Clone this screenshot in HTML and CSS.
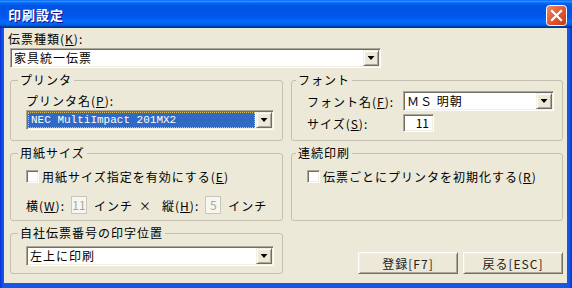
FILE: index.html
```html
<!DOCTYPE html>
<html lang="ja">
<head>
	<meta charset="utf-8">
	<title>印刷設定</title>
	<link rel="stylesheet" href="styles.css">
</head>
<body>
	<div class="window">
		<div class="title-bar">
			<span class="title">印刷設定</span>
			<span class="close-btn">
				<svg width="21" height="21" viewBox="0 0 21 21">
					<defs>
						<linearGradient id="closeFill" x1="0" y1="0" x2="1" y2="1">
							<stop offset="0" stop-color="#f08a6c"/>
							<stop offset="0.5" stop-color="#e05a35"/>
							<stop offset="1" stop-color="#c23a12"/>
						</linearGradient>
					</defs>
					<rect x="0.5" y="0.5" width="20" height="20" rx="3" fill="url(#closeFill)" stroke="#fff"/>
					<path d="M6 6 L15 15 M15 6 L6 15" stroke="#fff" stroke-width="2.2" stroke-linecap="square"/>
				</svg>
			</span>
		</div>

		<div class="client">
			<div class="slip-type">
				<div class="label">伝票種類(<u>K</u>):</div>
				<div class="combo slip-combo">
					<span class="value">家具統一伝票</span>
					<span class="drop"></span>
				</div>
			</div>

			<div class="groups">
				<fieldset class="group printer-group">
					<legend>プリンタ</legend>
					<div class="label">プリンタ名(<u>P</u>):</div>
					<div class="combo">
						<span class="value selected">NEC MultiImpact 201MX2</span>
						<span class="drop"></span>
					</div>
				</fieldset>

				<fieldset class="group font-group">
					<legend>フォント</legend>
					<div class="form-row">
						<span class="row-label">フォント名(<u>F</u>):</span>
						<div class="combo font-combo">
							<span class="value">ＭＳ 明朝</span>
							<span class="drop"></span>
						</div>
					</div>
					<div class="form-row size-row">
						<span class="row-label">サイズ(<u>S</u>):</span>
						<span class="textbox size-box">11</span>
					</div>
				</fieldset>

				<fieldset class="group paper-group">
					<legend>用紙サイズ</legend>
					<div class="check-row">
						<span class="checkbox"></span>
						<span>用紙サイズ指定を有効にする(<u>E</u>)</span>
					</div>
					<div class="paper-size">
						<span>横(<u>W</u>):</span>
						<span class="textbox disabled">11</span>
						<span class="unit">インチ</span>
						<span class="times">×</span>
						<span>縦(<u>H</u>):</span>
						<span class="textbox disabled">5</span>
						<span class="unit">インチ</span>
					</div>
				</fieldset>

				<fieldset class="group serial-group">
					<legend>連続印刷</legend>
					<div class="check-row">
						<span class="checkbox"></span>
						<span>伝票ごとにプリンタを初期化する(<u>R</u>)</span>
					</div>
				</fieldset>

				<fieldset class="group number-group">
					<legend>自社伝票番号の印字位置</legend>
					<div class="combo">
						<span class="value">左上に印刷</span>
						<span class="drop"></span>
					</div>
				</fieldset>

				<div class="button-container">
					<button id="save">登録[F7]</button>
					<button id="back">戻る[ESC]</button>
				</div>
			</div>
		</div>
	</div>
</body>
</html>
```

FILE: styles.css
```css
body {
	margin: 0;
	font-family: "Noto Sans CJK JP", sans-serif;
	font-size: 12px;
	color: #000;
	background: #fff;
}

u {
	text-decoration-thickness: 1px;
	text-underline-offset: 1px;
}

.window {
	width: 572px;
	height: 288px;
	box-sizing: border-box;
	display: flex;
	flex-direction: column;
	background: linear-gradient(to right, #0831d9, #1658e6 3px, #1658e6 calc(100% - 3px), #0831d9);
}

/* title bar */
.title-bar {
	height: 28px;
	box-sizing: border-box;
	display: flex;
	align-items: center;
	justify-content: space-between;
	padding: 0 5px 0 8px;
	background: linear-gradient(to bottom, #0058ee 0%, #3593ff 4%, #288eff 6%, #127dff 8%, #036ffc 10%, #0262ee 14%, #0057e5 20%, #0054e3 24%, #0055eb 56%, #005bf5 66%, #026afe 76%, #0062ef 86%, #0052d6 92%, #0040ab 94%, #003092 100%);
}

.title {
	color: #fff;
	font-weight: bold;
	font-size: 13px;
	letter-spacing: 1px;
	text-shadow: 1px 1px #0f1089;
}

.close-btn {
	display: flex;
	margin-top: 2px;
}

/* dialog body */
.client {
	flex: 1;
	margin: 0 5px 5px 4px;
	padding: 4px 4px 0 6px;
	background: #ece9d8;
	letter-spacing: 1px;
	display: flex;
	flex-direction: column;
}

.label {
	line-height: 14px;
	margin-bottom: 2px;
}

.slip-type .label {
	margin-left: -2px;
}

.slip-combo {
	width: 371px;
}

.groups {
	margin-top: 5px;
	display: grid;
	grid-template-columns: 273px 272px;
	grid-template-rows: 68px 75px 48px;
	column-gap: 8px;
	row-gap: 5px;
}

/* group boxes */
.group {
	margin: 0;
	padding: 0 8px 0 15px;
	min-width: 0;
	box-sizing: border-box;
	border: 1px solid #c3c0b0;
	border-radius: 3px;
}

.group legend {
	padding: 0 2px;
	margin-left: -8px;
	line-height: 14px;
}

.font-group legend, .serial-group legend {
	margin-left: -11px;
}

.printer-group {
	padding-top: 7px;
}

.font-group {
	padding-top: 4px;
}

.number-group {
	padding-top: 6px;
}

/* combo boxes */
.combo {
	display: flex;
	height: 20px;
	box-sizing: border-box;
	padding: 1px;
	background: #fff;
	border: 1px solid;
	border-color: #aca899 #fff #fff #aca899;
	box-shadow: inset 1px 1px #716f64, inset -1px -1px #f1efe2;
}

.combo .value {
	flex: 1;
	padding: 0 2px;
	line-height: 16px;
	white-space: nowrap;
	overflow: hidden;
}

.combo .value.selected {
	margin-right: 1px;
	padding-left: 3px;
	background: #316ac5;
	color: #fff;
	font-family: "Liberation Mono", monospace;
	font-size: 11px;
	letter-spacing: 0;
	outline: 1px dotted #d8c060;
	outline-offset: -1px;
}

.drop {
	width: 16px;
	box-sizing: border-box;
	display: flex;
	align-items: center;
	justify-content: center;
	background: #ece9d8;
	border: 1px solid;
	border-color: #f1efe2 #716f64 #716f64 #f1efe2;
	box-shadow: inset 1px 1px #fff, inset -1px -1px #aca899;
}

.drop::before {
	content: "";
	width: 7px;
	height: 4px;
	background: #000;
	clip-path: polygon(0 0, 100% 0, 50% 100%);
}

/* font group rows */
.form-row {
	display: flex;
	align-items: center;
}

.row-label {
	width: 96px;
}

.font-combo {
	width: 151px;
}

.size-row {
	margin-top: 3px;
}

.textbox {
	box-sizing: border-box;
	height: 18px;
	line-height: 14px;
	background: #fff;
	border: 1px solid;
	border-color: #aca899 #fff #fff #aca899;
	box-shadow: inset 1px 1px #716f64, inset -1px -1px #f1efe2;
}

.size-box {
	width: 31px;
	padding: 1px 4px 0 0;
	text-align: right;
	letter-spacing: 0;
}

.textbox.disabled {
	width: 16px;
	padding-top: 1px;
	text-align: center;
	letter-spacing: 0;
	color: #aca899;
	background: #f7f6f0;
	border-color: #c9c7ba;
	box-shadow: none;
}

/* paper size / serial print */
.check-row {
	margin-top: 9px;
	height: 15px;
	display: flex;
	align-items: center;
	gap: 3px;
}

.checkbox {
	width: 13px;
	height: 13px;
	box-sizing: border-box;
	background: #fff;
	border: 1px solid;
	border-color: #aca899 #fff #fff #aca899;
	box-shadow: inset 1px 1px #716f64, inset -1px -1px #f1efe2;
}

.paper-size {
	margin-top: 12px;
	display: flex;
	align-items: center;
	gap: 6px;
}

.paper-size .unit {
	margin-left: 1px;
}

.paper-size .times {
	margin: 0 4px 0 0;
}

/* buttons */
.button-container {
	align-self: end;
	display: flex;
	justify-content: flex-end;
	gap: 5px;
}

button {
	width: 100px;
	height: 22px;
	padding: 0;
	font-family: "Noto Sans CJK JP", sans-serif;
	font-size: 12px;
	letter-spacing: 1px;
	color: #222;
	background: #ece9d8;
	border: 1px solid;
	border-color: #fff #716f64 #716f64 #fff;
	box-shadow: inset 1px 1px #f1efe2, inset -1px -1px #aca899;
	cursor: pointer;
}
```
